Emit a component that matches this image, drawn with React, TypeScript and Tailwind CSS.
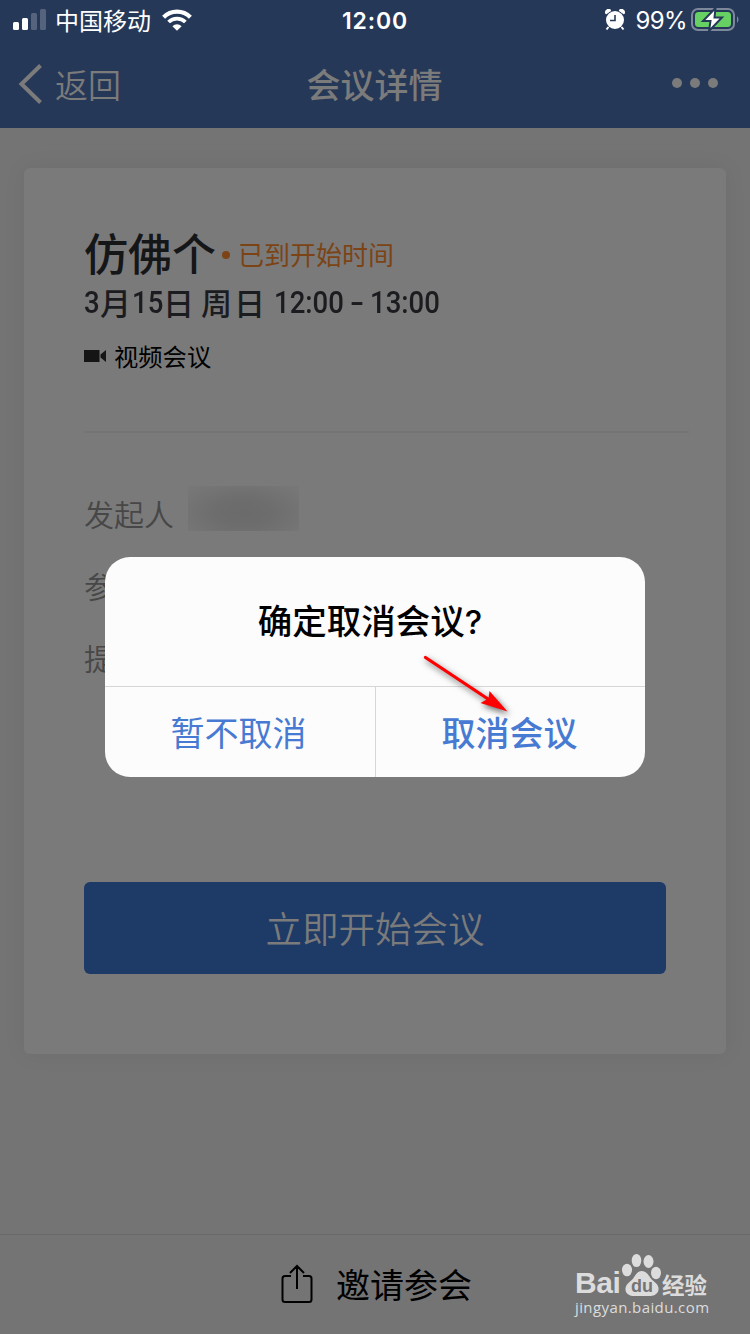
import clsx from "clsx";

const details = ["发起人", "参会人", "提醒"];

export default function App() {
  return (
    <div className="relative flex h-[1334px] w-[750px] flex-col overflow-hidden bg-[#747474] font-['Noto_Sans_CJK_SC',sans-serif]">
      <header className="h-32 shrink-0 bg-[#263858]">
        <StatusBar />
        <NavBar />
      </header>
      <main className="flex-1 px-6 pt-10">
        <MeetingCard />
      </main>
      <InviteBar />
      <CancelDialog />
      <Pointer />
      <Watermark />
    </div>
  );
}

function StatusBar() {
  return (
    <div className="grid h-10 grid-cols-3 items-center text-white">
      <div className="flex h-full items-center pl-[13px]">
        <svg width="34" height="22" viewBox="0 0 34 22" className="shrink-0" fill="#fff">
          <rect x="0" y="13" width="6" height="8" rx="1.5" />
          <rect x="9" y="9" width="6" height="12" rx="1.5" />
          <rect x="18" y="4" width="6" height="17" rx="1.5" opacity=".22" />
          <rect x="27" y="0" width="6" height="21" rx="1.5" opacity=".22" />
        </svg>
        <span className="ml-[8px] whitespace-nowrap text-[24px] leading-10">中国移动</span>
        <svg width="30" height="22" viewBox="0 0 30 22" className="ml-[11px] shrink-0" fill="none" stroke="#fff">
          <path d="M1.6 8.2a19 19 0 0 1 26.8 0" strokeWidth="4.2" />
          <path d="M6.6 13a12 12 0 0 1 16.8 0" strokeWidth="3.8" />
          <path d="M15 21.7l-4.6-4.5a6.6 6.6 0 0 1 9.2 0z" fill="#fff" stroke="none" />
        </svg>
      </div>
      <div className="pt-[2px] text-center font-[Inter,sans-serif] text-[23px] font-semibold leading-[38px] tracking-[0.9px]">
        12:00
      </div>
      <div className="flex h-full items-center justify-end pr-[11px]">
        <svg width="20" height="22" viewBox="0 0 20 22" className="mb-px shrink-0">
          <path d="M1 5a3 3 0 0 1 5-3.5zM19 5a3 3 0 0 0-5-3.5z" fill="#fff" stroke="#fff" strokeLinejoin="round" />
          <path d="M3.5 18 1.5 20.5M16.5 18 18.5 20.5" stroke="#fff" strokeWidth="2" />
          <circle cx="10" cy="11" r="9" fill="#fff" />
          <path d="M10 6v5.500H5" stroke="#263858" strokeWidth="1.6" fill="none" />
        </svg>
        <span className="ml-[10px] pt-[2px] font-[Inter,sans-serif] text-[24px] leading-[38px] tracking-[-0.6px]">99%</span>
        <svg width="48" height="24" viewBox="0 0 48 24" className="ml-1 shrink-0">
          <rect x="1" y="1" width="42" height="21" rx="6" fill="none" stroke="#7d889b" strokeWidth="2" />
          <path d="M46 8q3 3.500 0 7z" fill="#7d889b" />
          <rect x="4" y="4" width="36" height="15" rx="3.5" fill="#66d063" />
          <path d="M24.500 0 12 13h7.500L18 23 31 9.500h-7.500z" fill="#fff" stroke="#263858" strokeWidth="2" />
        </svg>
      </div>
    </div>
  );
}

function NavBar() {
  return (
    <div className="grid h-[88px] grid-cols-3 items-center text-[#7b7b7b]">
      <div className="flex items-center pl-[18px]">
        <svg width="26" height="40" viewBox="0 0 26 40" fill="none" stroke="currentColor" strokeWidth="4">
          <path d="M22.500 1.500 3.500 20l19 18.500" />
        </svg>
        <span className="ml-[11px] text-[33px] font-[350] leading-[86px]">返回</span>
      </div>
      <h1 className="pr-[1px] text-center text-[34px] font-medium leading-[86px]">会议详情</h1>
      <div className="flex justify-end gap-2 pb-[2px] pr-8">
        <i className="size-[10px] rounded-full bg-current" />
        <i className="size-[10px] rounded-full bg-current" />
        <i className="size-[10px] rounded-full bg-current" />
      </div>
    </div>
  );
}

function MeetingCard() {
  return (
    <section className="flex h-[886px] w-[702px] flex-col rounded-md bg-[#7a7a7a] px-[60px] pt-[57px] shadow-[0_0_24px_rgba(0,0,0,0.06)]">
      <div className="flex h-[54px] items-center">
        <h2 className="text-[44px] font-medium leading-[54px] text-[#151618]">仿佛个</h2>
        <i className="ml-[6px] mt-[5px] size-2 rounded-full bg-[#7c4416]" />
        <span className="ml-2 mt-[3px] text-[26px] leading-[50px] text-[#7c4416]">已到开始时间</span>
      </div>
      <MeetingTime />
      <div className="mt-[14px] flex h-9 items-center text-black">
        <svg width="23" height="14" viewBox="0 0 23 14" fill="#151515">
          <path d="M0 1h15.500v12H0zM16.500 5.500 22 1v12l-5.500-4.500z" />
        </svg>
        <span className="ml-[7px] text-[24.3px] leading-9">视频会议</span>
      </div>
      <hr className="mt-[57px] w-[605px] border-0 border-t-2 border-[#747474]" />
      <dl className="mt-[45px] text-[30px] font-[350] text-[#474747]">
        {details.map((label, i) => (
          <div key={label} className="flex h-[72px] items-center">
            <dt className="pb-[2px] leading-[70px]">{label}</dt>
            {i === 0 && (
              <dd className="mb-[11px] ml-[14px] h-[45px] w-[111px] bg-[radial-gradient(ellipse_at_50%_60%,#6b6b6b_0%,#6d6d6d_35%,#777777_90%)]" />
            )}
          </div>
        ))}
      </dl>
      <button className="mt-[188px] h-[92px] w-[582px] rounded-md bg-[#1e3a66] text-[36.5px] font-[350] leading-[90px] text-[#7b7b7b]">
        立即开始会议
      </button>
    </section>
  );
}

// narrow digits, DIN-like
function Digits({ text, className }: { text: string; className: string }) {
  return (
    <span className={clsx("origin-left font-[Roboto,sans-serif] text-[32px]", className)}>{text}</span>
  );
}

function MeetingTime() {
  return (
    <p className="mt-px flex h-11 items-center whitespace-nowrap text-[31px] font-medium leading-[44px] text-[#1b1c1f]">
      <Digits text="3" className="w-[16px] scale-x-[0.86]" />
      <span className="w-[32px]">月</span>
      <Digits text="15" className="w-[31px] scale-x-[0.86]" />
      <span className="w-[38px]">日</span>
      <span className="w-[73px] tracking-[2px]">周日</span>
      <Digits text="12:00" className="w-[76px] scale-x-[0.86]" />
      <Digits text="-" className="w-[20px] scale-x-[1.3]" />
      <Digits text="13:00" className="w-[70px] scale-x-[0.86]" />
    </p>
  );
}

function InviteBar() {
  return (
    <footer className="flex h-[100px] shrink-0 items-center border-t border-[#696969] pb-[2px] pl-[281px] text-black">
      <svg width="32" height="40" viewBox="0 0 32 40" fill="none" stroke="currentColor" strokeWidth="2">
        <path d="M10 12H4a2.500 2.500 0 0 0-2.500 2.500v21A2.500 2.500 0 0 0 4 38h24a2.500 2.500 0 0 0 2.500-2.500v-21A2.500 2.500 0 0 0 28 12h-6M16 25V2M9 9l7-7 7 7" />
      </svg>
      <span className="ml-[23px] text-[34px] leading-[96px]">邀请参会</span>
    </footer>
  );
}

function CancelDialog() {
  return (
    <div className="absolute inset-0 flex items-center justify-center">
      <div role="dialog" className="flex h-[220px] w-[540px] flex-col overflow-hidden rounded-[25px] bg-[#fcfcfc]">
        <h3 className="h-[129px] pr-[10px] text-center text-[34.5px] font-medium leading-[125px] text-black">
          确定取消会议<span className="font-[Inter,sans-serif] text-[33px]">?</span>
        </h3>
        <div className="flex flex-1 border-t border-[#d6d6d6] text-[34px] text-[#477ad2]">
          <button className="w-[270px] pb-[1px] pr-[3px]">暂不取消</button>
          <button className="flex-1 border-l border-[#d6d6d6] pb-[1px] pr-[2px] font-medium">取消会议</button>
        </div>
      </div>
    </div>
  );
}

function Pointer() {
  return (
    <svg
      width="100"
      height="72"
      viewBox="0 0 100 72"
      className="absolute left-[418px] top-[650px] drop-shadow-[2px_3px_3px_rgba(0,0,0,0.6)]"
    >
      <path d="M7.500 7.500 70 49" stroke="#f00" strokeWidth="3.3" strokeLinecap="round" />
      <path d="M89.500 61.500 71.500 41l-1 7.500L62.500 53z" fill="#f00" />
    </svg>
  );
}

function Watermark() {
  return (
    <div className="absolute left-[575px] top-[1250px] w-[140px] text-[#dcdcdc]">
      <div className="flex h-12 items-end leading-none">
        <span className="w-[47px] pb-px font-['Liberation_Sans',sans-serif] text-[30px] font-bold leading-[29px] tracking-[-0.4px]">
          Bai
        </span>
        <svg width="40" height="44" viewBox="0 0 40 44" fill="currentColor" className="mb-[1px] shrink-0">
          <ellipse cx="5" cy="17" rx="5" ry="6.3" />
          <ellipse cx="14.5" cy="7.5" rx="4.8" ry="6.6" />
          <ellipse cx="26.500" cy="8.5" rx="5" ry="6.4" />
          <ellipse cx="34" cy="20" rx="5" ry="6.2" />
          <path d="M19.500 18c5 0 7 4 9 7 3 4 9 6 8 12-1 5-6 6-9 6H12c-4 0-8-2-8.500-6-.5-6 5-8 8-12 2-3 4-7 8-7z" />
          <text x="20" y="39" textAnchor="middle" fontFamily="Liberation Sans" fontSize="18" fontWeight="bold" fill="#747474">
            du
          </text>
        </svg>
        <span className="whitespace-nowrap pb-[3px] text-[22.5px] font-bold">经验</span>
      </div>
      <p className="whitespace-nowrap font-['Open_Sans',sans-serif] text-[15px] font-medium leading-[18px] tracking-[0.4px]">
        jingyan.baidu.com
      </p>
    </div>
  );
}
